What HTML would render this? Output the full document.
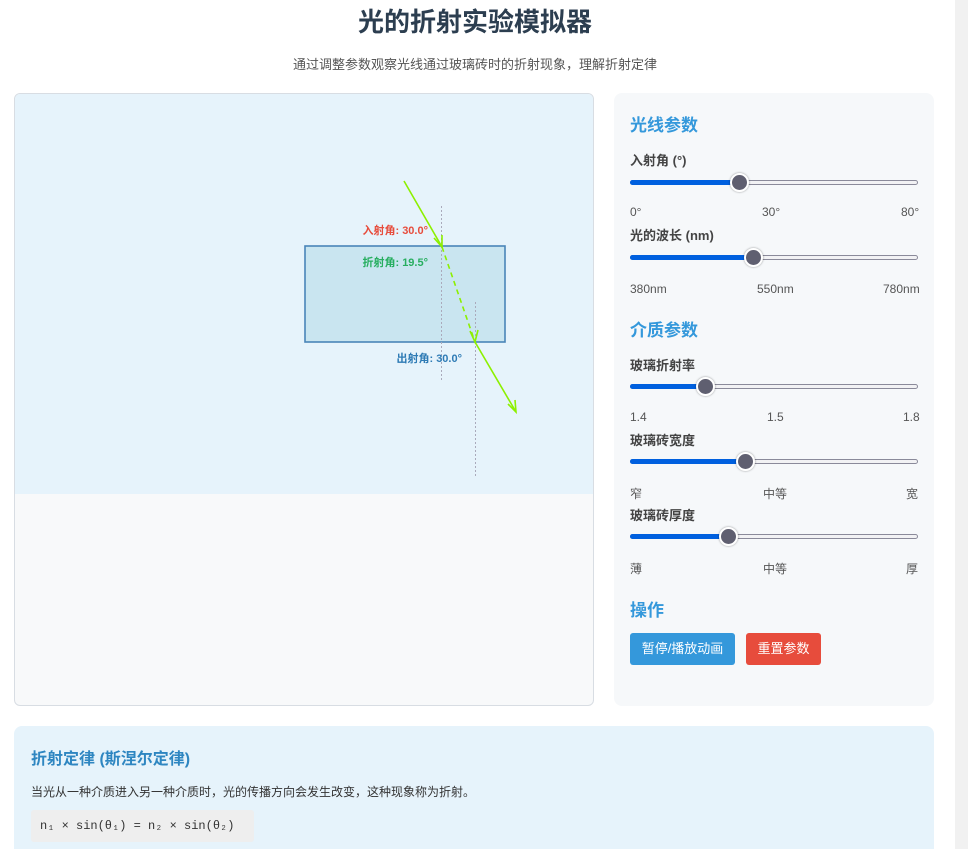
<!DOCTYPE html>
<html><head><meta charset="utf-8"><style>
*{margin:0;padding:0;box-sizing:border-box}
html,body{width:968px;height:849px;overflow:hidden}
body{background:#fff;font-family:"Liberation Sans","Noto Sans CJK SC",sans-serif;position:relative;color:#333}
.a{position:absolute;white-space:nowrap}
.sb{position:absolute;left:955px;top:0;width:13px;height:849px;background:#f1f1f1}
h1{position:absolute;left:0;width:950px;text-align:center;top:2px;font-size:26px;font-weight:bold;color:#2c3e50}
.sub{left:0;width:950px;text-align:center;top:54px;font-size:13px;color:#555}
.canvasbox{position:absolute;left:14px;top:93px;width:580px;height:613px;border:1px solid #d8dde3;border-radius:6px;background:#f8f9fa;overflow:hidden}
.panel{position:absolute;left:614px;top:93px;width:320px;height:613px;border-radius:8px;background:#f6f8fa}
.h{font-size:17px;font-weight:bold;color:#3498db}
.lb{font-size:13px;font-weight:bold;color:#444}
.rl{font-size:12px;color:#555}
.track{position:absolute;left:630px;width:288px;height:5px;border:1px solid #8a8a9a;border-radius:3px;background:#f2f2f4}
.fill{position:absolute;left:630px;height:5px;border-radius:3px;background:#0060df}
.th{position:absolute;width:19px;height:19px;border-radius:50%;background:#5f5f70;border:2px solid #fff;box-shadow:0 0 2px rgba(0,0,0,.4)}
.btn{position:absolute;top:633px;height:32px;border-radius:3px;color:#fff;font-size:13px;text-align:center;line-height:32px}
.info{position:absolute;left:14px;top:726px;width:920px;height:140px;border-radius:8px;background:#e6f3fb}
</style></head><body>
<div class="sb"></div>
<h1>光的折射实验模拟器</h1>
<div class="a sub">通过调整参数观察光线通过玻璃砖时的折射现象，理解折射定律</div>

<div class="canvasbox">
<svg width="580" height="400" style="position:absolute;left:0;top:0;background:#e6f3fb">
<rect x="290" y="152" width="200" height="96" fill="#c9e5f0" stroke="#4a85b8" stroke-width="1.6"/>
<line x1="426.5" y1="112" x2="426.5" y2="288" stroke="#aab" stroke-width="1" stroke-dasharray="2,2"/>
<line x1="460.5" y1="208" x2="460.5" y2="384" stroke="#aab" stroke-width="1" stroke-dasharray="2,2"/>
<g stroke="#8cf000" stroke-width="1.6" fill="none">
<line x1="389" y1="87" x2="427" y2="153"/>
<polyline points="419,144 427,153 427,141"/>
<line x1="427" y1="153" x2="460" y2="248" stroke-dasharray="5,4"/>
<polyline points="455,237 460,248 463,236"/>
<line x1="460" y1="248" x2="501" y2="318"/>
<polyline points="493,310 501,318 500,306"/>
</g>
<g font-family="Liberation Sans,Noto Sans CJK SC,sans-serif" font-size="11" font-weight="bold">
<text x="413" y="140" text-anchor="end" fill="#e74c3c">入射角: 30.0°</text>
<text x="413" y="172" text-anchor="end" fill="#27ae60">折射角: 19.5°</text>
<text x="447" y="268" text-anchor="end" fill="#2e7bb5">出射角: 30.0°</text>
</g>
</svg>
</div>

<div class="panel"></div>
<div class="a h" style="left:630px;top:111px">光线参数</div>
<div class="a lb" style="left:630px;top:150px">入射角 (°)</div>
<div class="track" style="top:180px"></div><div class="fill" style="top:180px;width:110px"></div><div class="th" style="left:730px;top:173px"></div>
<div class="a rl" style="left:630px;top:205px">0°</div><div class="a rl" style="left:762px;top:205px">30°</div><div class="a rl" style="left:901px;top:205px">80°</div>
<div class="a lb" style="left:630px;top:225px">光的波长 (nm)</div>
<div class="track" style="top:255px"></div><div class="fill" style="top:255px;width:124px"></div><div class="th" style="left:744px;top:248px"></div>
<div class="a rl" style="left:630px;top:282px">380nm</div><div class="a rl" style="left:757px;top:282px">550nm</div><div class="a rl" style="left:883px;top:282px">780nm</div>

<div class="a h" style="left:630px;top:316px">介质参数</div>
<div class="a lb" style="left:630px;top:355px">玻璃折射率</div>
<div class="track" style="top:384px"></div><div class="fill" style="top:384px;width:76px"></div><div class="th" style="left:696px;top:377px"></div>
<div class="a rl" style="left:630px;top:410px">1.4</div><div class="a rl" style="left:767px;top:410px">1.5</div><div class="a rl" style="left:903px;top:410px">1.8</div>
<div class="a lb" style="left:630px;top:430px">玻璃砖宽度</div>
<div class="track" style="top:459px"></div><div class="fill" style="top:459px;width:116px"></div><div class="th" style="left:736px;top:452px"></div>
<div class="a rl" style="left:630px;top:485px">窄</div><div class="a rl" style="left:763px;top:485px">中等</div><div class="a rl" style="left:906px;top:485px">宽</div>
<div class="a lb" style="left:630px;top:505px">玻璃砖厚度</div>
<div class="track" style="top:534px"></div><div class="fill" style="top:534px;width:99px"></div><div class="th" style="left:719px;top:527px"></div>
<div class="a rl" style="left:630px;top:560px">薄</div><div class="a rl" style="left:763px;top:560px">中等</div><div class="a rl" style="left:906px;top:560px">厚</div>

<div class="a h" style="left:630px;top:596px">操作</div>
<div class="btn" style="left:630px;width:105px;background:#3498db">暂停/播放动画</div>
<div class="btn" style="left:746px;width:75px;background:#e74c3c">重置参数</div>

<div class="info"></div>
<div class="a" style="left:31px;top:745px;font-size:16px;font-weight:bold;color:#2e86c1">折射定律 (斯涅尔定律)</div>
<div class="a" style="left:31px;top:783px;font-size:12px;color:#333">当光从一种介质进入另一种介质时，光的传播方向会发生改变，这种现象称为折射。</div>
<div class="a" style="left:31px;top:810px;width:223px;height:32px;background:#eee;border-radius:3px;font-family:'Liberation Mono',monospace;font-size:12px;line-height:32px;padding-left:9px;color:#333">n₁ × sin(θ₁) = n₂ × sin(θ₂)</div>
</body></html>
